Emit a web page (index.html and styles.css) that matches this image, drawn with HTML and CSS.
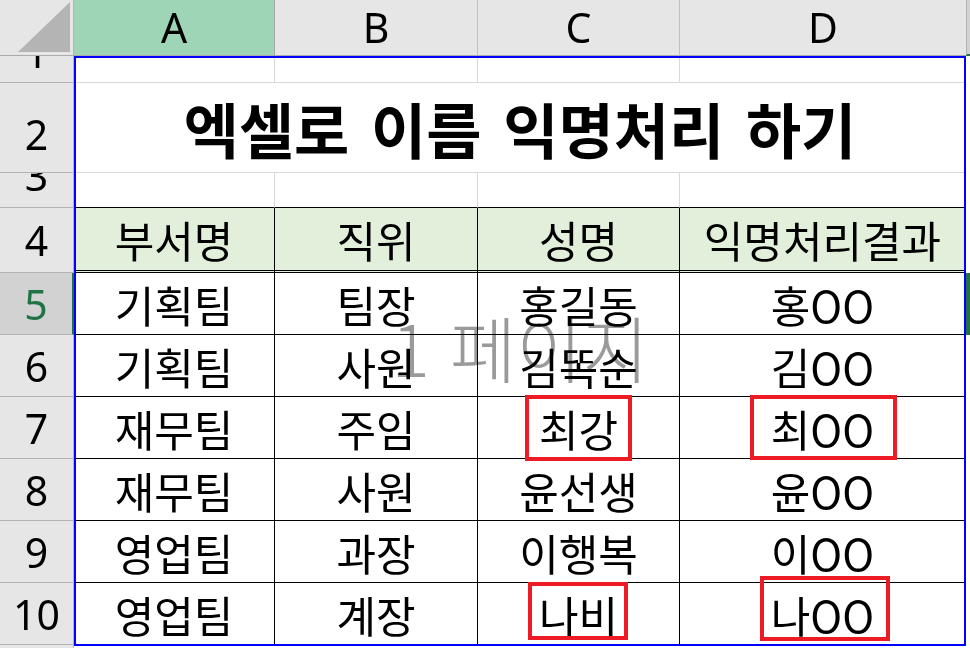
FILE: index.html
```html
<!DOCTYPE html>
<html lang="ko">
<head>
<meta charset="utf-8">
<title>엑셀로 이름 익명처리 하기</title>
<link rel="stylesheet" href="styles.css">
</head>
<body>
<div class="sheet">
  <div class="grid">
    <!-- column headers -->
    <div class="corner"><svg class="corner-tri" width="74" height="56" viewBox="0 0 74 56"><polygon points="18,52 70,52 70,2" fill="#b4b4b4"/></svg></div>
    <div class="colhead is-selected">A</div>
    <div class="colhead">B</div>
    <div class="colhead">C</div>
    <div class="colhead last">D</div>
    <div class="colhead col-e"></div>

    <!-- row 1 -->
    <div class="rowhead clip-1"><span>1</span></div>
    <div class="cell plain"></div>
    <div class="cell plain"></div>
    <div class="cell plain"></div>
    <div class="cell plain"></div>
    <div class="cell out"></div>

    <!-- row 2 -->
    <div class="rowhead tall"><span>2</span></div>
    <div class="cell title">엑셀로 이름 익명처리 하기</div>
    <div class="cell out"></div>

    <!-- row 3 -->
    <div class="rowhead clip-3"><span>3</span></div>
    <div class="cell plain top-of-table"></div>
    <div class="cell plain top-of-table"></div>
    <div class="cell plain top-of-table"></div>
    <div class="cell plain top-of-table"></div>
    <div class="cell out"></div>

    <!-- row 4 -->
    <div class="rowhead"><span>4</span></div>
    <div class="cell head">부서명</div>
    <div class="cell head">직위</div>
    <div class="cell head">성명</div>
    <div class="cell head">익명처리결과</div>
    <div class="cell out"></div>

    <!-- row 5 -->
    <div class="rowhead is-selected"><span>5</span></div>
    <div class="cell data">기획팀</div>
    <div class="cell data">팀장</div>
    <div class="cell data">홍길동</div>
    <div class="cell data">홍OO</div>
    <div class="cell out active"></div>

    <!-- row 6 -->
    <div class="rowhead"><span>6</span></div>
    <div class="cell data">기획팀</div>
    <div class="cell data">사원</div>
    <div class="cell data">김똑순</div>
    <div class="cell data">김OO</div>
    <div class="cell out"></div>

    <!-- row 7 -->
    <div class="rowhead"><span>7</span></div>
    <div class="cell data">재무팀</div>
    <div class="cell data">주임</div>
    <div class="cell data">최강</div>
    <div class="cell data">최OO</div>
    <div class="cell out"></div>

    <!-- row 8 -->
    <div class="rowhead"><span>8</span></div>
    <div class="cell data">재무팀</div>
    <div class="cell data">사원</div>
    <div class="cell data">윤선생</div>
    <div class="cell data">윤OO</div>
    <div class="cell out"></div>

    <!-- row 9 -->
    <div class="rowhead"><span>9</span></div>
    <div class="cell data">영업팀</div>
    <div class="cell data">과장</div>
    <div class="cell data">이행복</div>
    <div class="cell data">이OO</div>
    <div class="cell out"></div>

    <!-- row 10 -->
    <div class="rowhead"><span>10</span></div>
    <div class="cell data">영업팀</div>
    <div class="cell data">계장</div>
    <div class="cell data">나비</div>
    <div class="cell data">나OO</div>
    <div class="cell out"></div>

    <!-- row 11 (cut) -->
    <div class="rowhead stub"></div>
    <div class="cell stub-cell"></div>
    <div class="cell stub-cell"></div>
    <div class="cell stub-cell"></div>
    <div class="cell stub-cell"></div>
    <div class="cell stub-cell"></div>
  </div>

  <!-- overlays -->
  <div class="print-area"></div>
  <div class="watermark">1 페이지</div>
  <div class="mark mark-c7"></div>
  <div class="mark mark-d7"></div>
  <div class="mark mark-c10"></div>
  <div class="mark mark-d10"></div>
</div>
</body>
</html>
```

FILE: styles.css
```css
html, body {
  margin: 0;
  padding: 0;
  background: #ffffff;
}

.sheet {
  position: relative;
  width: 970px;
  height: 648px;
  overflow: hidden;
  background: #ffffff;
  font-family: "Noto Sans CJK KR", "Noto Sans", sans-serif;
  color: #000000;
}

.grid {
  display: grid;
  grid-template-columns: 74px 201px 203px 202px 286px 4px;
  grid-template-rows: 56px 27px 90px 35px 65px 62px 62px 62px 62px 62px 62px 3px;
}

.grid > div {
  box-sizing: border-box;
  display: flex;
  align-items: center;
  justify-content: center;
  overflow: hidden;
  min-width: 0;
}

/* ---------- column header bar ---------- */
.corner {
  background: #e6e6e6;
  border-right: 1px solid #b4b4b4;
  border-bottom: 1px solid #ababab;
}
.corner-tri {
  display: block;
  flex: none;
}

.grid > .colhead {
  background: #e6e6e6;
  border-right: 1px solid #c0c0c0;
  border-bottom: 1px solid #ababab;
  font-family: "Noto Sans", "Open Sans", sans-serif;
  font-size: 41px;
  line-height: 55px;
  color: #000;
  overflow: visible;
}
.grid > .colhead.is-selected {
  background: #9fd5b7;
  border-right-color: #a8a8a8;
}
.grid > .colhead.last {
  border-right: none;
}
.grid > .colhead.col-e {
  background: #d2d2d2;
  border-right: none;
  border-left: 1px solid #b4b4b4;
  border-bottom: 2px solid #217346;
}

/* ---------- row header column ---------- */
.rowhead {
  background: #e6e6e6;
  border-right: 1px solid #b4b4b4;
  border-bottom: 1px solid #b4b4b4;
  font-family: "Noto Sans", "Open Sans", sans-serif;
  font-size: 41px;
  color: #000;
}
.rowhead span {
  display: block;
  line-height: 40px;
  flex: none;
}
.rowhead.is-selected {
  background: #d2d2d2;
  color: #217346;
  border-right: 2px solid #217346;
}
.grid > .rowhead.clip-1 {
  align-items: flex-start;
}
.rowhead.clip-1 span {
  margin-top: -24px;
}
.grid > .rowhead.clip-3 {
  align-items: flex-start;
}
.rowhead.clip-3 span {
  margin-top: -18px;
}
.rowhead.tall span {
  margin-top: 12px;
}
.rowhead.stub {
  border-bottom: none;
}

/* ---------- cells ---------- */
.cell {
  font-size: 43px;
  line-height: 44px;
}
.cell.plain {
  border-right: 1px solid #d9d9d9;
  border-bottom: 1px solid #d9d9d9;
}
.cell.top-of-table {
  border-bottom: 1px solid #000000;
}
.cell.title {
  grid-column: span 4;
  border-bottom: 1px solid #d9d9d9;
  font-weight: 700;
  font-size: 60px;
  line-height: 62px;
  word-spacing: 5px;
}
.cell.head {
  background: #e2efda;
  border-right: 1px solid #000000;
  border-bottom: 3px double #000000;
}
.cell.data {
  border-right: 1px solid #000000;
  border-bottom: 1px solid #000000;
}
.cell.out {
  background: #ffffff;
}
.cell.out.active {
  background: #a6a6a6;
  border: 2px solid #217346;
}
.cell.stub-cell {
  background: #ffffff;
}

/* ---------- overlays ---------- */
.print-area {
  position: absolute;
  left: 74px;
  top: 56px;
  width: 892px;
  height: 590px;
  box-sizing: border-box;
  border: 2px solid #0000ff;
  pointer-events: none;
}

.watermark {
  position: absolute;
  left: 74px;
  top: 300px;
  width: 892px;
  height: 92px;
  display: flex;
  align-items: center;
  justify-content: center;
  font-family: "Noto Sans CJK KR", sans-serif;
  font-weight: 300;
  font-size: 72px;
  line-height: 72px;
  color: #9a9a9a;
  mix-blend-mode: multiply;
  pointer-events: none;
}

.mark {
  position: absolute;
  box-sizing: border-box;
  border: 4px solid #ed1c24;
  pointer-events: none;
}
.mark-c7 {
  left: 525px;
  top: 395px;
  width: 107px;
  height: 66px;
}
.mark-d7 {
  left: 750px;
  top: 395px;
  width: 147px;
  height: 65px;
}
.mark-c10 {
  left: 528px;
  top: 582px;
  width: 100px;
  height: 58px;
}
.mark-d10 {
  left: 760px;
  top: 576px;
  width: 130px;
  height: 65px;
}
```
